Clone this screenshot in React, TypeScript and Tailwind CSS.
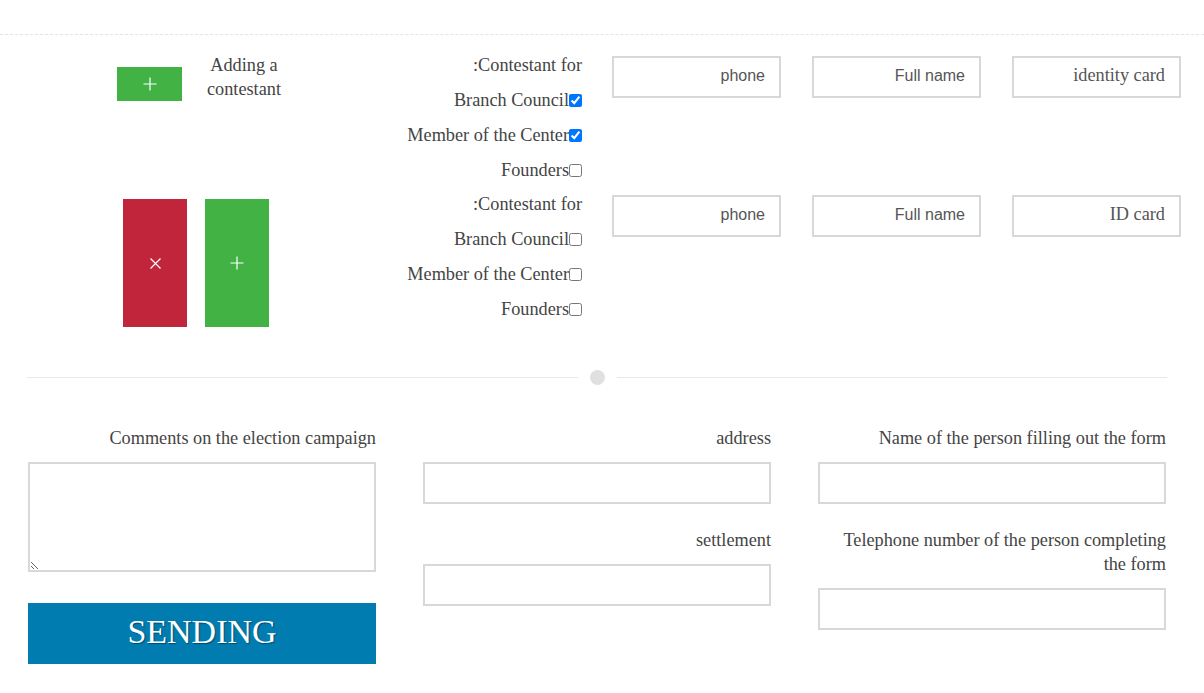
import React from 'react';

const serif = "font-['Liberation_Serif','Times_New_Roman',serif]";

const Plus: React.FC = () => (
  <svg width="14" height="14" viewBox="0 0 14 14" fill="none">
    <path d="M7 0.5v13M0.5 7h13" stroke="white" strokeWidth="1.2" />
  </svg>
);

const Cross: React.FC = () => (
  <svg width="11" height="11" viewBox="0 0 11 11" fill="none">
    <path d="M0.5 0.5l10 10M10.5 0.5l-10 10" stroke="white" strokeWidth="1.2" />
  </svg>
);

const ContestantChecks: React.FC<{ checked: boolean[] }> = ({ checked }) => {
  const items = ['Branch Council', 'Member of the Center', 'Founders'];
  return (
    <div className="w-[182px] flex flex-col items-end gap-[17px] leading-[18px] text-[18.25px]">
      <span>:Contestant for</span>
      {items.map((label, i) => (
        <label key={label} className="flex items-center">
          <span>{label}</span>
          <input type="checkbox" defaultChecked={checked[i]} className="m-0 w-[13px] h-[13px]" />
        </label>
      ))}
    </div>
  );
};

const SmallInput: React.FC<{ placeholder: string; serifText?: boolean }> = ({ placeholder, serifText }) => (
  <input
    placeholder={placeholder}
    className={
      'w-[169px] h-[42px] border-2 border-[#d8d8d8] bg-white text-right pr-[14px] outline-none placeholder:text-[#555] ' +
      (serifText
        ? "font-['Liberation_Serif',serif] text-[18.25px] pb-[4px]"
        : "font-['Liberation_Sans',Arial,sans-serif] text-[16px] pb-[2px]")
    }
  />
);

const FieldInputs: React.FC<{ idLabel: string }> = ({ idLabel }) => (
  <div className="flex gap-[31px] ml-[30px]">
    <SmallInput placeholder="phone" />
    <SmallInput placeholder="Full name" />
    <SmallInput placeholder={idLabel} serifText />
  </div>
);

const Field: React.FC<{ label: React.ReactNode; last?: boolean }> = ({ label, last }) => (
  <div className={last ? '' : 'mb-[24px]'}>
    <div className="text-right text-[18.25px] leading-[24px] mb-[12px]">{label}</div>
    <input className="block w-full h-[42px] border-2 border-[#d8d8d8] bg-white outline-none" />
  </div>
);

export default function App() {
  return (
    <div className={`w-[1204px] h-[693px] bg-white text-[#444] overflow-hidden ${serif}`}>
      {/* top dashed rule */}
      <div className="h-[35px] border-b border-dashed border-[#e4e4e4]" />

      {/* Contestant row 1 */}
      <div className="flex mt-[21px]">
        <div className="w-[400px] flex items-start">
          <button className="ml-[117px] mt-[11px] w-[65px] h-[34px] bg-[#43b244] flex items-center justify-center">
            <Plus />
          </button>
          <div className="w-[100px] ml-[12px] -mt-[3px] text-center text-[18.25px] leading-[24px]">
            Adding a contestant
          </div>
        </div>
        <ContestantChecks checked={[true, true, false]} />
        <FieldInputs idLabel="identity card" />
      </div>

      {/* Contestant row 2 */}
      <div className="flex mt-[16px]">
        <div className="w-[400px] flex items-start gap-[18px] pl-[123px] pt-[4px]">
          <button className="w-[64px] h-[128px] bg-[#c1253b] flex items-center justify-center">
            <Cross />
          </button>
          <button className="w-[64px] h-[128px] bg-[#43b244] flex items-center justify-center">
            <Plus />
          </button>
        </div>
        <ContestantChecks checked={[false, false, false]} />
        <FieldInputs idLabel="ID card" />
      </div>

      {/* divider with dot */}
      <div className="flex items-center mt-[43px] mx-[27px] w-[1140px] h-[15px]">
        <div className="flex-1 h-px bg-[#e8e8e8]" />
        <div className="w-[15px] h-[15px] rounded-full bg-[#e0e0e0] mx-[12px]" />
        <div className="flex-1 h-px bg-[#e8e8e8]" />
      </div>

      {/* bottom form */}
      <div className="grid grid-cols-3 gap-[47px] ml-[28px] w-[1138px] mt-[41px]">
        <div>
          <div className="text-right text-[18.25px] leading-[24px] mb-[12px]">Comments on the election campaign</div>
          <textarea dir="rtl" className="block w-full h-[110px] border-2 border-[#d8d8d8] bg-white outline-none" />
          <button className="mt-[31px] w-full h-[61px] pb-[4px] bg-[#007cb0] text-white text-[34px] leading-none [text-shadow:1px_1px_1px_rgba(0,0,0,0.4)]">
            SENDING
          </button>
        </div>
        <div>
          <Field label="address" />
          <Field label="settlement" last />
        </div>
        <div>
          <Field label="Name of the person filling out the form" />
          <Field label="Telephone number of the person completing the form" last />
        </div>
      </div>
    </div>
  );
}
